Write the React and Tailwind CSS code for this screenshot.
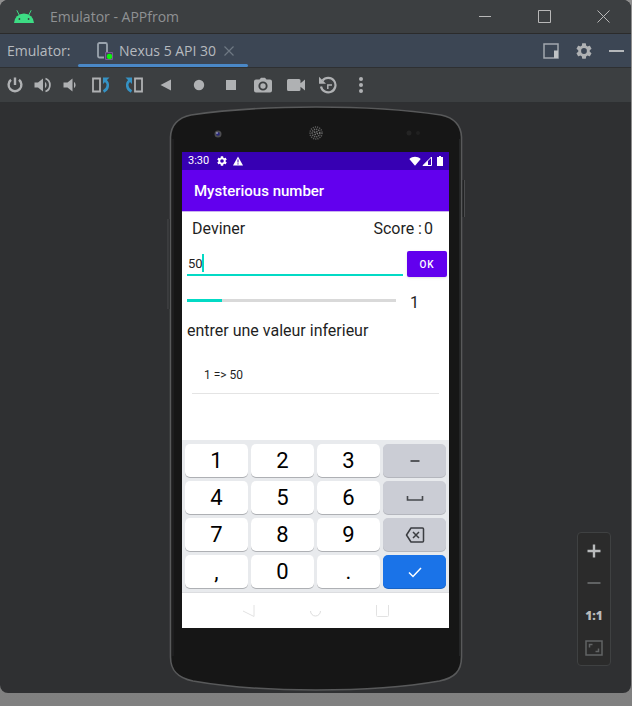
import React from "react";

const UI = "font-['Open_Sans','Noto_Sans',sans-serif]";

function AndroidHead() {
  return (
    <svg width="20" height="13" viewBox="0 0 20 13" aria-hidden="true">
      <path d="M0 13a10 9.6 0 0 1 20 0z" fill="#3ddc84" />
      <path d="M5.2 5 3 .6M14.800 5 17 .6" stroke="#3ddc84" strokeWidth="1" strokeLinecap="round" />
      <circle cx="5.4" cy="9" r=".9" fill="#3c3f41" />
      <circle cx="14.6" cy="9" r=".9" fill="#3c3f41" />
    </svg>
  );
}

const GEAR =
  "M19.14 12.94c.04-.3.06-.61.06-.94s-.02-.64-.07-.94l2.03-1.58a.49.49 0 0 0 .12-.61l-1.92-3.32a.49.49 0 0 0-.59-.22l-2.39.96c-.5-.38-1.03-.7-1.62-.94l-.36-2.54A.48.48 0 0 0 13.92 2.4h-3.84c-.24 0-.43.17-.47.41l-.36 2.54c-.59.24-1.13.57-1.62.94l-2.39-.96a.48.48 0 0 0-.59.22L2.74 8.87a.48.48 0 0 0 .12.61l2.03 1.58c-.05.3-.09.63-.09.94s.02.64.07.94l-2.03 1.58a.49.49 0 0 0-.12.61l1.92 3.32c.12.22.37.29.59.22l2.39-.96c.5.38 1.03.7 1.62.94l.36 2.54c.05.24.24.41.48.41h3.84c.24 0 .44-.17.47-.41l.36-2.54c.59-.24 1.13-.56 1.62-.94l2.39.96c.22.08.47 0 .59-.22l1.92-3.32a.48.48 0 0 0-.12-.61zM12 15.6a3.6 3.6 0 1 1 0-7.2 3.6 3.6 0 0 1 0 7.2z";

function Gear({ size }) {
  return (
    <svg width={size} height={size} viewBox="2 2 20 20" fill="currentColor" aria-hidden="true">
      <path d={GEAR} />
    </svg>
  );
}

function TitleBar() {
  return (
    <header className="flex h-[33px] items-center bg-[#3c3f41] pr-[21px] pl-3.5 text-[#b8b8b8]">
      <AndroidHead />
      <h1 className="ml-4 flex-1 text-[14px] leading-5 text-[#8f9193]">Emulator - APPfrom</h1>
      <div className="flex gap-[45px]">
        <button aria-label="Minimize">
          <svg width="14" height="14" className="block" stroke="currentColor"><path d="M1 6.500h12" /></svg>
        </button>
        <button aria-label="Maximize">
          <svg width="14" height="14" className="block" stroke="currentColor" fill="none"><path d="M1.500.500h12v12h-12z" /></svg>
        </button>
        <button aria-label="Close">
          <svg width="14" height="14" className="block" stroke="currentColor"><path d="M1.500.500l12 12M13.500.500l-12 12" /></svg>
        </button>
      </div>
    </header>
  );
}

function TabBar() {
  return (
    <nav className="flex h-[34px] border-t border-[#2b2b2b] bg-[#3c4654] pr-[7px] pl-[7px] text-[14px] leading-5 text-[#b6babf]">
      <span className="w-[71px] self-center">Emulator:</span>
      <div className="relative flex w-[170px] items-center justify-between pr-3.5 pl-[19px]">
        <button className="flex items-center">
          <svg width="16" height="18" viewBox="0 0 16 18" className="mr-1.5" aria-hidden="true">
            <path d="M7 15.500H2.500a1.500 1.500 0 0 1-1.500-1.500V2.500A1.500 1.500 0 0 1 2.500 1h6A1.500 1.500 0 0 1 10 2.500V10" fill="none" stroke="#9aa3ad" strokeWidth="1.800" />
            <path d="M8.500 10.500h7v7h-7z" fill="#4b4160" stroke="#7d579c" strokeWidth="1" />
            <circle cx="12.500" cy="14.500" r="2.700" fill="#0cf20c" />
          </svg>
          Nexus 5 API 30
        </button>
        <button aria-label="Close tab">
          <svg width="10" height="10" className="block" stroke="#6e7883" strokeWidth="1.200"><path d="M.5.500l9 9M9.500.500l-9 9" /></svg>
        </button>
        <div className="absolute inset-x-0 bottom-0 h-[3px] rounded-full bg-[#4a88c7]" />
      </div>
      <div className="ml-auto flex items-center gap-[17px] text-[#afb1b3]">
        <button aria-label="Dock view">
          <svg width="16" height="16" className="block"><path d="M1 1h14v14H1z" fill="none" stroke="#a2a8ae" strokeWidth="1.500" /><path d="M11 7.500h4V15h-4z" fill="#c0c3c5" /></svg>
        </button>
        <button aria-label="Settings"><Gear size={16} /></button>
        <button aria-label="Hide">
          <svg width="15" height="16" className="block"><path d="M0 8h15" stroke="#b5b8bb" strokeWidth="2" /></svg>
        </button>
      </div>
    </nav>
  );
}

const VOLUME_TOOLS = [
  ["Power", <path key="a" d="M9 1.500v7.500M5 3.800a6.400 6.400 0 1 0 8 0" fill="none" stroke="currentColor" strokeWidth="2.400" />],
  ["Volume up", <g key="a"><path d="M.5 6.500h3.500L9 2.500v13l-5-4H.5z" /><path d="M11 5.800a4 4 0 0 1 0 6.400z" /><path d="M11.500 2.500a7 7 0 0 1 0 13" fill="none" stroke="currentColor" strokeWidth="1.800" /></g>],
  ["Volume down", <g key="a"><path d="M1.500 6.500h4l5-4v13l-5-4h-4z" /><path d="M12 5.800a4 4 0 0 1 0 6.400z" /></g>],
];

const DEVICE_TOOLS = [
  ["Rotate left", <g key="a" fill="none"><path d="M1 2.500h7v13H1z" stroke="currentColor" strokeWidth="1.800" /><path d="M11.500 15.500c5-2.500 5.500-8 2-11" stroke="#3592c4" strokeWidth="2.600" /><path d="M11 1.500h6.500L11 8z" fill="#3592c4" /></g>],
  ["Rotate right", <g key="a" fill="none"><path d="M10 2.500h7v13h-7z" stroke="currentColor" strokeWidth="1.800" /><path d="M6.500 15.500c-5-2.500-5.500-8-2-11" stroke="#3592c4" strokeWidth="2.600" /><path d="M7 1.500H.500L7 8z" fill="#3592c4" /></g>],
  ["Back", <path key="a" d="M3.500 9 14 3.500v11z" />],
  ["Home", <circle key="a" cx="9" cy="9" r="5.200" />],
  ["Overview", <path key="a" d="M4 4h10v10H4z" />],
  ["Take screenshot", <g key="a"><path fillRule="evenodd" d="M2 3.500h3.500L7 1.800h4l1.500 1.700H16a2 2 0 0 1 2 2v9a2 2 0 0 1-2 2H2a2 2 0 0 1-2-2v-9a2 2 0 0 1 2-2zM9 5.400a4.600 4.600 0 1 0 0 9.200 4.600 4.600 0 0 0 0-9.200z" /><circle cx="9" cy="10" r="2.700" /></g>],
  ["Record screen", <path key="a" d="M1.500 3H12a1.500 1.500 0 0 1 1.500 1.500v2.800L18 3.500v11l-4.500-3.800v2.800A1.500 1.500 0 0 1 12 15H1.500A1.500 1.500 0 0 1 0 13.500v-9A1.500 1.500 0 0 1 1.500 3z" />],
  ["Snapshots", <g key="a"><path d="M3.500 4.500A7.300 7.300 0 1 1 2 10.500" fill="none" stroke="currentColor" strokeWidth="2.200" /><path d="M0 .800v7h7z" /><path d="M13 9H8.800v4" fill="none" stroke="currentColor" strokeWidth="1.500" /></g>],
  ["More", <g key="a"><circle cx="9" cy="3" r="2" /><circle cx="9" cy="9" r="2" /><circle cx="9" cy="15" r="2" /></g>],
];

function ToolButton({ tool: [label, icon] }) {
  return (
    <button aria-label={label} className="flex justify-center">
      <svg width="18" height="18" viewBox="0 0 18 18" fill="currentColor">{icon}</svg>
    </button>
  );
}

function Toolbar() {
  return (
    <div role="toolbar" className="flex h-9 items-center border-y border-[#2e3032] bg-[#3c3f41] pl-px text-[#afb1b3]">
      <div className="grid w-[84px] grid-cols-3">
        {VOLUME_TOOLS.map((tool) => <ToolButton key={tool[0]} tool={tool} />)}
      </div>
      <div className="grid w-[292px] grid-cols-9">
        {DEVICE_TOOLS.map((tool) => <ToolButton key={tool[0]} tool={tool} />)}
      </div>
    </div>
  );
}

function PhoneBody() {
  return (
    <svg className="absolute inset-0 h-full w-full" viewBox="0 0 299 586" aria-hidden="true">
      <path d="M3 114v90" stroke="#222324" strokeWidth="3" />
      <path d="M2 114v90" stroke="#515254" strokeWidth="1" />
      <path d="M297.500 75v37" stroke="#222324" strokeWidth="3" />
      <path d="M298.500 75v37" stroke="#4b4c4e" strokeWidth="1" />
      <path
        d="M4.500 32C5 20 11 13 25 10 65 4 110 2 150 2s85 2 125 8c14 3 20 10 20.500 22v520c0 14-7 21-22 24-40 7-83 9-123.500 9s-83-2-123-9c-15-3-22.500-10-22.500-24z"
        fill="#161616" stroke="#58595a" strokeWidth="1.600"
      />
      <path d="M7 34v517M293.500 34v517" stroke="#242526" strokeWidth="1" />
      <circle cx="52" cy="29" r="3.500" fill="#4d4d50" />
      <circle cx="52" cy="29" r="1.800" fill="#25257a" />
      <circle cx="51" cy="28" r=".8" fill="#cfcfe8" />
      <circle cx="150" cy="28" r="6" fill="none" stroke="#5c5c5c" strokeWidth="1.500" strokeDasharray="1.200 1" />
      <circle cx="150" cy="28" r="3.800" fill="none" stroke="#6e6e6e" strokeWidth="1.600" strokeDasharray="1.200 1" />
      <circle cx="150" cy="28" r="1.500" fill="none" stroke="#787878" strokeWidth="1.500" strokeDasharray="1.200 1" />
      <circle cx="243" cy="28" r="2.500" fill="#242424" />
      <circle cx="252" cy="28" r="2" fill="#202020" />
    </svg>
  );
}

function StatusBar() {
  return (
    <div className="flex h-[18px] items-center bg-[#3700b3] px-1.5 text-white">
      <span className="text-[11px] leading-4">3:30</span>
      <span className="ml-2 flex items-center gap-1.5">
        <Gear size={10} />
        <svg width="10" height="10" viewBox="0 0 10 10"><path d="M5 .500 10 9.500H0z" fill="#fff" /><path d="M5 3.500v3M5 7.300v1.200" stroke="#3700b3" /></svg>
      </span>
      <span className="ml-auto flex items-center gap-px">
        <svg width="12" height="10" viewBox="0 0 12 10"><path d="M.3 3C3.500 0 8.500 0 11.700 3L6 9.800z" fill="#fff" /></svg>
        <svg width="10" height="10" viewBox="0 0 10 10"><path d="M9.500 1v8.500H1z" fill="none" stroke="#fff" /><path d="M6 4.500v5H1z" fill="#fff" /></svg>
        <svg width="6" height="10" viewBox="0 0 6 10" className="ml-1"><path d="M2 0h2v1h2v9H0V1h2z" fill="#fff" /></svg>
      </span>
    </div>
  );
}

function GameForm() {
  return (
    <main className="h-[229px] border-t border-[#c9b3ee] bg-white text-[#1f1f1f]">
      <div className="flex justify-between pt-[7px] pr-4 pl-2.5 text-[16px] leading-5">
        <label htmlFor="guess">Deviner</label>
        <p className="flex gap-0.5"><span>Score :</span><span>0</span></p>
      </div>
      <div className="mt-3 flex items-center gap-1 pr-0.5 pl-[5px]">
        <div className="relative flex-1">
          <input id="guess" type="text" inputMode="numeric" defaultValue="50" className="block h-6 w-full border-b-2 border-[#03dac5] bg-transparent pl-px text-[13px] leading-4 outline-none" />
          <span className="absolute top-0.5 left-[15px] h-[18px] w-0.5 bg-[#03dac5]" />
        </div>
        <button className="h-[26px] w-10 rounded-xs bg-[#6200ee] text-[10px] font-medium tracking-widest text-white shadow-sm">OK</button>
      </div>
      <div className="mt-4 flex items-center pl-[5px]">
        <progress aria-label="Essais" max="6" value="1" className="mb-1.5 block h-[3px] w-[209px] appearance-none [&::-webkit-progress-bar]:bg-[#d9d9d9] [&::-webkit-progress-value]:bg-[#03dac5]" />
        <output className="ml-3.5 text-[16px] leading-5">1</output>
      </div>
      <p className="mt-2 pl-[5px] text-[16px] leading-5">entrer une valeur inferieur</p>
      <ul className="mt-4 mr-2.5 ml-2.5">
        <li className="h-[37px] border-b border-[#e4e4e4] pl-3 text-[12px] leading-[37px]">1 =&gt; 50</li>
      </ul>
    </main>
  );
}

const MinusIcon = <svg width="18" height="18"><path d="M4.500 9h9" stroke="#2f3033" strokeWidth="1.500" /></svg>;
const SpaceIcon = <svg width="18" height="18"><path d="M1.500 7v4h15V7" fill="none" stroke="#46484c" strokeWidth="1.600" /></svg>;
const DeleteIcon = (
  <svg width="20" height="16" fill="none" stroke="#3b3d41" strokeWidth="1.500">
    <path d="M6 1h11.500q1 0 1 1v12q0 1-1 1H6L1.500 8z" strokeLinejoin="round" />
    <path d="M8 5l6 6M14 5l-6 6" />
  </svg>
);
const CheckIcon = <svg width="16" height="14" fill="none" stroke="#fff" strokeWidth="1.500"><path d="M2 7.500l4 4L14 3" /></svg>;

const KEYS = [
  "1", "2", "3", ["Minus", MinusIcon],
  "4", "5", "6", ["Space", SpaceIcon],
  "7", "8", "9", ["Delete", DeleteIcon],
  ",", "0", ".", ["Done", CheckIcon],
];

function Keyboard() {
  return (
    <div className="grid grid-cols-4 gap-x-[3px] gap-y-1 border-b border-[#dcdde0] bg-[#e8eaed] px-[3px] pt-1 pb-1">
      {KEYS.map((key) => {
        if (typeof key === "string") {
          return (
            <button key={key} className="h-[33px] rounded-[5px] bg-white pt-px text-[22px] leading-8 text-black shadow-[0_1px_0_#aeb0b4]">
              {key}
            </button>
          );
        }
        const [label, icon] = key;
        const tone = label === "Done" ? "bg-[#1a73e8] shadow-[0_1px_0_#1763c6]" : "bg-[#cbcdd5] shadow-[0_1px_0_#b4b6bd]";
        return (
          <button key={label} aria-label={label} className={`flex h-[33px] items-center justify-center rounded-[5px] ${tone}`}>
            {icon}
          </button>
        );
      })}
    </div>
  );
}

function NavBar() {
  return (
    <div className="flex h-[35px] items-center justify-center gap-[54px] bg-white">
      <button aria-label="Back"><svg width="13" height="13" className="block" fill="none" stroke="#e2e2e2"><path d="M12 1v11.500L1 7" /></svg></button>
      <button aria-label="Home"><svg width="13" height="13" className="block" fill="none" stroke="#dedede"><path d="M1.500 7a5 5 0 0 0 10 0" /></svg></button>
      <button aria-label="Recents"><svg width="13" height="13" className="block" fill="none" stroke="#e2e2e2"><path d="M.5 1v10.500q0 1 1 1h10q1 0 1-1V1" /></svg></button>
    </div>
  );
}

function Phone() {
  return (
    <div className="relative w-[299px] px-4 pt-[47px] pb-[63px]">
      <PhoneBody />
      <div className="relative font-[Roboto,sans-serif]">
        <StatusBar />
        <h2 className="bg-[#6200ee] px-3 pt-[11px] pb-[9px] text-[15px] leading-[21px] font-medium text-white">Mysterious number</h2>
        <GameForm />
        <Keyboard />
        <NavBar />
      </div>
    </div>
  );
}

function ZoomPanel() {
  return (
    <div className="absolute right-5 bottom-[27px] flex w-[34px] flex-col items-center gap-4 rounded-[4px] border border-[#3f4142] bg-[#2b2b2b] py-[9px] text-[#b9bbbc]">
      <button aria-label="Zoom in"><svg width="18" height="18" className="block"><path d="M9 2.500v13M2.500 9h13" stroke="currentColor" strokeWidth="2.400" /></svg></button>
      <button aria-label="Zoom out"><svg width="18" height="16" className="block"><path d="M2.500 7h13" stroke="#606263" strokeWidth="2" /></svg></button>
      <button className="h-4 text-[12px] leading-4 font-extrabold">1:1</button>
      <button aria-label="Zoom to fit">
        <svg width="18" height="16" className="block" fill="none" stroke="#626465" strokeWidth="1.500"><path d="M1 1h16v14H1z" /><path d="M4.500 7.500v-3h3M13.500 8.500v3h-3" /></svg>
      </button>
    </div>
  );
}

export default function App() {
  return (
    <div className={`min-h-screen bg-linear-to-b from-[#8f8f8f] to-[#808080] pr-px ${UI}`}>
      <div className="overflow-hidden rounded-lg bg-[#2f3032]">
        <TitleBar />
        <TabBar />
        <Toolbar />
        <div className="relative flex justify-center pt-0.5 pb-0.5">
          <Phone />
          <ZoomPanel />
        </div>
      </div>
    </div>
  );
}
